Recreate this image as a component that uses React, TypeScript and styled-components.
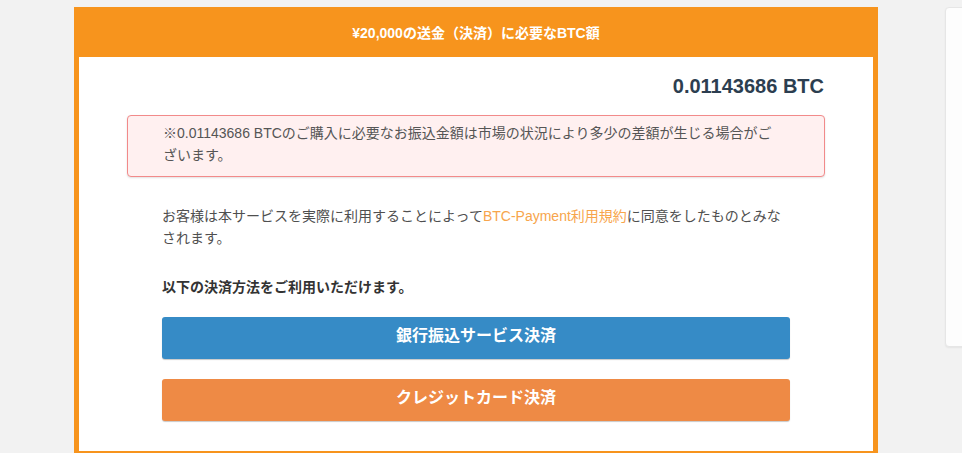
import React from "react";
import styled, { createGlobalStyle } from "styled-components";

const GlobalStyle = createGlobalStyle`
  html, body {
    margin: 0;
    padding: 0;
    background: #f2f2f2;
    overflow: hidden;
  }
  body {
    font-family: "Liberation Sans", Arial, "Noto Sans CJK JP", sans-serif;
    font-size: 14px;
    color: #555;
  }
`;

const Page = styled.div`
  display: flex;
  align-items: flex-start;
  padding: 7px 0 0 74px;
  gap: 67px;
  width: 100vw;
  box-sizing: border-box;
  overflow: hidden;
`;

const Panel = styled.section`
  width: 804px;
  box-sizing: border-box;
  border: 5px solid #f7941d;
  border-top: 0;
  background: #fff;
  flex-shrink: 0;
`;

const Header = styled.header`
  height: 50px;
  margin: 0 -5px;
  background: #f7941d;
  color: #fff;
  font-weight: 700;
  font-size: 14px;
  display: flex;
  align-items: center;
  justify-content: center;
`;

const Body = styled.div`
  padding: 15px 48px 30px;
  display: flex;
  flex-direction: column;
`;

const Amount = styled.div`
  text-align: right;
  font-size: 20px;
  line-height: 28px;
  font-weight: 700;
  color: #2c3e50;
  margin-right: 1px;
`;

const Alert = styled.div`
  margin-top: 15px;
  background: #fff0f0;
  border: 1px solid #f28a8a;
  border-radius: 4px;
  box-shadow: 0 1px 2px rgba(0, 0, 0, 0.12);
  padding: 6px 40px 10px 35px;
  line-height: 22px;
  color: #555;
`;

const Content = styled.div`
  padding: 0 35px;
  display: flex;
  flex-direction: column;
`;

const Terms = styled.p`
  margin: 28px 0 0;
  line-height: 22px;
  color: #4f4f4f;
`;

const Link = styled.a`
  color: #f7a54c;
  text-decoration: none;
`;

const Lead = styled.p`
  margin: 27px 0 0;
  line-height: 22px;
  font-weight: 700;
  color: #333;
`;

const Buttons = styled.div`
  margin-top: 19px;
  display: flex;
  flex-direction: column;
  gap: 20px;
`;

const PayButton = styled.button<{ $color: string }>`
  height: 42px;
  width: 100%;
  border: 0;
  border-radius: 3px;
  background: ${(p) => p.$color};
  box-shadow: 0 1px 1px rgba(0, 0, 0, 0.22);
  color: #fff;
  font-family: inherit;
  font-size: 16px;
  line-height: 20px;
  font-weight: 700;
  cursor: pointer;
  padding: 0 0 4px;
`;

const SideCard = styled.aside`
  width: 300px;
  height: 340px;
  box-sizing: border-box;
  background: #fdfdfd;
  border: 1px solid #e6e6e6;
  border-radius: 4px;
  box-shadow: 0 1px 2px rgba(0, 0, 0, 0.06);
  flex-shrink: 0;
`;

export default function App() {
  return (
    <>
      <GlobalStyle />
      <Page>
        <Panel>
          <Header>¥20,000の送金（決済）に必要なBTC額</Header>
          <Body>
            <Amount>0.01143686 BTC</Amount>
            <Alert>
              ※0.01143686 BTCのご購入に必要なお振込金額は市場の状況により多少の差額が生じる場合がございます。
            </Alert>
            <Content>
              <Terms>
                お客様は本サービスを実際に利用することによって
                <Link href="#">BTC-Payment利用規約</Link>
                に同意をしたものとみなされます。
              </Terms>
              <Lead>以下の決済方法をご利用いただけます。</Lead>
              <Buttons>
                <PayButton $color="#368bc6">銀行振込サービス決済</PayButton>
                <PayButton $color="#ee8a45">クレジットカード決済</PayButton>
              </Buttons>
            </Content>
          </Body>
        </Panel>
        <SideCard />
      </Page>
    </>
  );
}
